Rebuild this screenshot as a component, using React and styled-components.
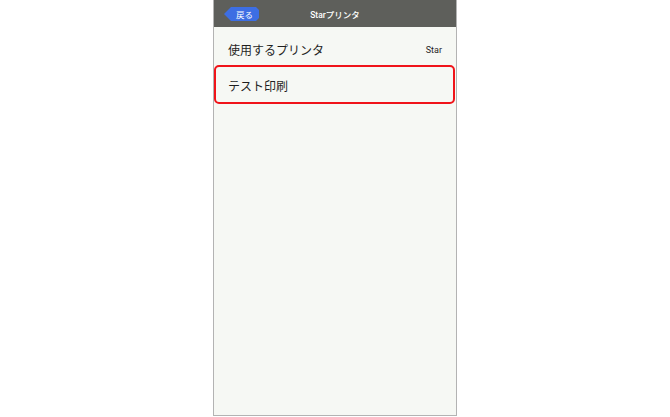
import React from 'react';
import styled, { createGlobalStyle } from 'styled-components';

const Global = createGlobalStyle`
  html, body {
    margin: 0;
    padding: 0;
    background: #ffffff;
  }
  body {
    font-family: Roboto, "Noto Sans CJK JP", sans-serif;
  }
`;

const Page = styled.div`
  display: flex;
  justify-content: center;
  width: 670px;
  height: 417px;
`;

const Phone = styled.div`
  width: 242px;
  height: 415px;
  display: flex;
  flex-direction: column;
  background: #f6f8f4;
  border: 1px solid #b3b3b3;
  border-top: none;
`;

const Header = styled.div`
  position: relative;
  height: 27px;
  background: #5e5f5b;
  display: flex;
  align-items: center;
  justify-content: center;
  flex-shrink: 0;
`;

const Title = styled.div`
  color: #ffffff;
  font-family: Roboto, "Noto Sans CJK JP", sans-serif;
  font-size: 8.5px;
  font-weight: 500;
`;

const BackButton = styled.button`
  position: absolute;
  left: 10px;
  top: 7px;
  height: 14px;
  padding: 0 6px 0 12px;
  border: none;
  background: #3d6ee3;
  color: #ffffff;
  font-family: "Noto Sans CJK JP", sans-serif;
  font-size: 8.5px;
  line-height: 14px;
  clip-path: polygon(0 50%, 7px 0, calc(100% - 3px) 0, 100% 3px, 100% calc(100% - 3px), calc(100% - 3px) 100%, 7px 100%);
  cursor: pointer;
`;

const List = styled.div`
  display: flex;
  flex-direction: column;
  padding-top: 7px;
`;

const Row = styled.div`
  height: ${p => (p.$selected ? '33px' : '31px')};
  display: flex;
  align-items: center;
  justify-content: space-between;
  padding: ${p => (p.$selected ? '2px 12px 0 12px' : '0 14px')};
  margin: ${p => (p.$selected ? '0 1px 0 0' : '0')};
  border: ${p => (p.$selected ? '2px solid #f0141a' : 'none')};
  border-radius: ${p => (p.$selected ? '5px' : '0')};
`;

const Label = styled.span`
  font-family: "Noto Sans CJK JP", sans-serif;
  font-size: 12px;
  color: #1f1f1f;
`;

const Value = styled.span`
  font-family: Roboto, sans-serif;
  font-size: 9px;
  font-weight: 400;
  color: #1f1f1f;
`;

export default function App() {
  return (
    <Page>
      <Global />
      <Phone>
        <Header>
          <BackButton>戻る</BackButton>
          <Title>Starプリンタ</Title>
        </Header>
        <List>
          <Row>
            <Label>使用するプリンタ</Label>
            <Value>Star</Value>
          </Row>
          <Row $selected>
            <Label>テスト印刷</Label>
          </Row>
        </List>
      </Phone>
    </Page>
  );
}
